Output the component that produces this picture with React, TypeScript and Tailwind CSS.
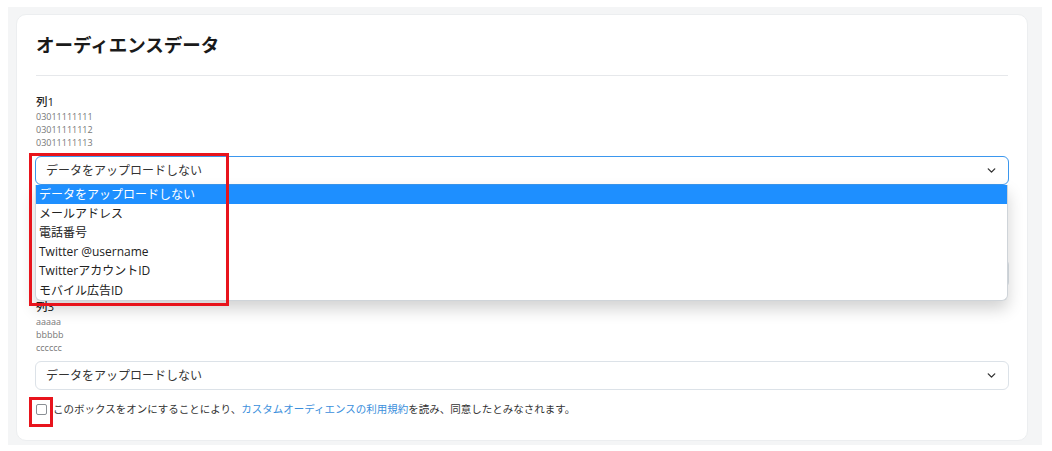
import { ChevronDown } from "lucide-react"

const font = { fontFamily: '"Open Sans", "Noto Sans CJK JP", sans-serif' }

const options = [
    "データをアップロードしない",
    "メールアドレス",
    "電話番号",
    "Twitter @username",
    "TwitterアカウントID",
    "モバイル広告ID",
]

// 列2 sits under the open menu, so its texts are not visible
const columns = [
    { label: "列1", values: ["03011111111", "03011111112", "03011111113"], open: true, hidden: false },
    { label: "列2", values: ["user1@example.com", "user2@example.com", "user3@example.com"], open: false, hidden: true },
    { label: "列3", values: ["aaaaa", "bbbbb", "cccccc"], open: false, hidden: false },
]

const Select = ({ open, hidden }: { open: boolean; hidden: boolean }) => {
    return (
        <div className="relative mt-[7px]">
            <div
                className={
                    open
                        ? "flex h-[29px] items-center justify-between rounded-[6px] border border-[#3b97ee] bg-white pl-[10px] pr-[10px]"
                        : "flex h-[29px] items-center justify-between rounded-[6px] border border-[#dce2e8] bg-white pl-[10px] pr-[10px]"
                }
            >
                <span className={hidden ? "invisible text-[12px] text-[#333]" : "text-[12px] text-[#333]"}>
                    データをアップロードしない
                </span>
                <ChevronDown className="h-[13px] w-[13px] text-[#333]" strokeWidth={2.5} />
            </div>
            {open && (
                <div className="absolute left-0 right-[1px] top-full z-10 overflow-hidden rounded-b-[6px] border border-t-0 border-[#cfd4d9] bg-white shadow-[0_8px_16px_rgba(0,0,0,0.18)]">
                    {options.map((o, i) => (
                        <div
                            key={o}
                            className={
                                i === 0
                                    ? "flex h-[19.2px] items-center bg-[#1e8fff] pl-[3px] text-[12px] text-white"
                                    : "flex h-[19.2px] items-center pl-[3px] text-[12px] text-[#222]"
                            }
                        >
                            {o}
                        </div>
                    ))}
                </div>
            )}
        </div>
    )
}

const App = () => {
    return (
        <div className="relative h-[451px] w-[1052px] bg-white pl-2 pt-[7px]" style={font}>
            <div className="w-[1034px] bg-[#f4f5f6] pb-[4px] pl-2 pr-[14px] pt-[7px]">
                <div className="rounded-[10px] border border-[#eceef0] bg-white px-[18px] pb-[22px] pt-[16px]">
                    <h1 className="pl-px text-[18.5px] font-bold leading-[28px] text-[#1a1a1a]">オーディエンスデータ</h1>
                    <div className="mx-px mt-[16px] h-px bg-[#e6e8eb]" />
                    <div className="mt-[18px] flex flex-col gap-[11.5px]">
                        {columns.map((c) => (
                            <div key={c.label}>
                                <div className={c.hidden ? "invisible text-[11.5px] leading-[16px]" : "pl-px text-[11.5px] font-medium leading-[16px] text-[#222]"}>
                                    {c.label}
                                </div>
                                {c.values.map((v) => (
                                    <div key={v} className={c.hidden ? "invisible text-[9px] leading-[13px]" : "pl-px text-[9px] leading-[13px] text-[#777]"}>
                                        {v}
                                    </div>
                                ))}
                                <Select open={c.open} hidden={c.hidden} />
                            </div>
                        ))}
                    </div>
                    <div className="mt-[12px] flex items-center gap-[6px] pl-px">
                        <span className="h-[11px] w-[11px] rounded-[2px] border border-[#8a8f95] bg-white" />
                        <span className="text-[10.5px] text-[#333]">
                            このボックスをオンにすることにより、
                            <a className="text-[#3b8fdc]">カスタムオーディエンスの利用規約</a>
                            を読み、同意したとみなされます。
                        </span>
                    </div>
                </div>
            </div>
            {/* red annotation boxes */}
            <div className="pointer-events-none absolute left-[29px] top-[153px] z-20 h-[153px] w-[200px] border-[3px] border-[#e8141c]" />
            <div className="pointer-events-none absolute left-[29px] top-[397px] z-20 h-[30px] w-[24px] border-[3px] border-[#e8141c]" />
        </div>
    )
}

export default App
